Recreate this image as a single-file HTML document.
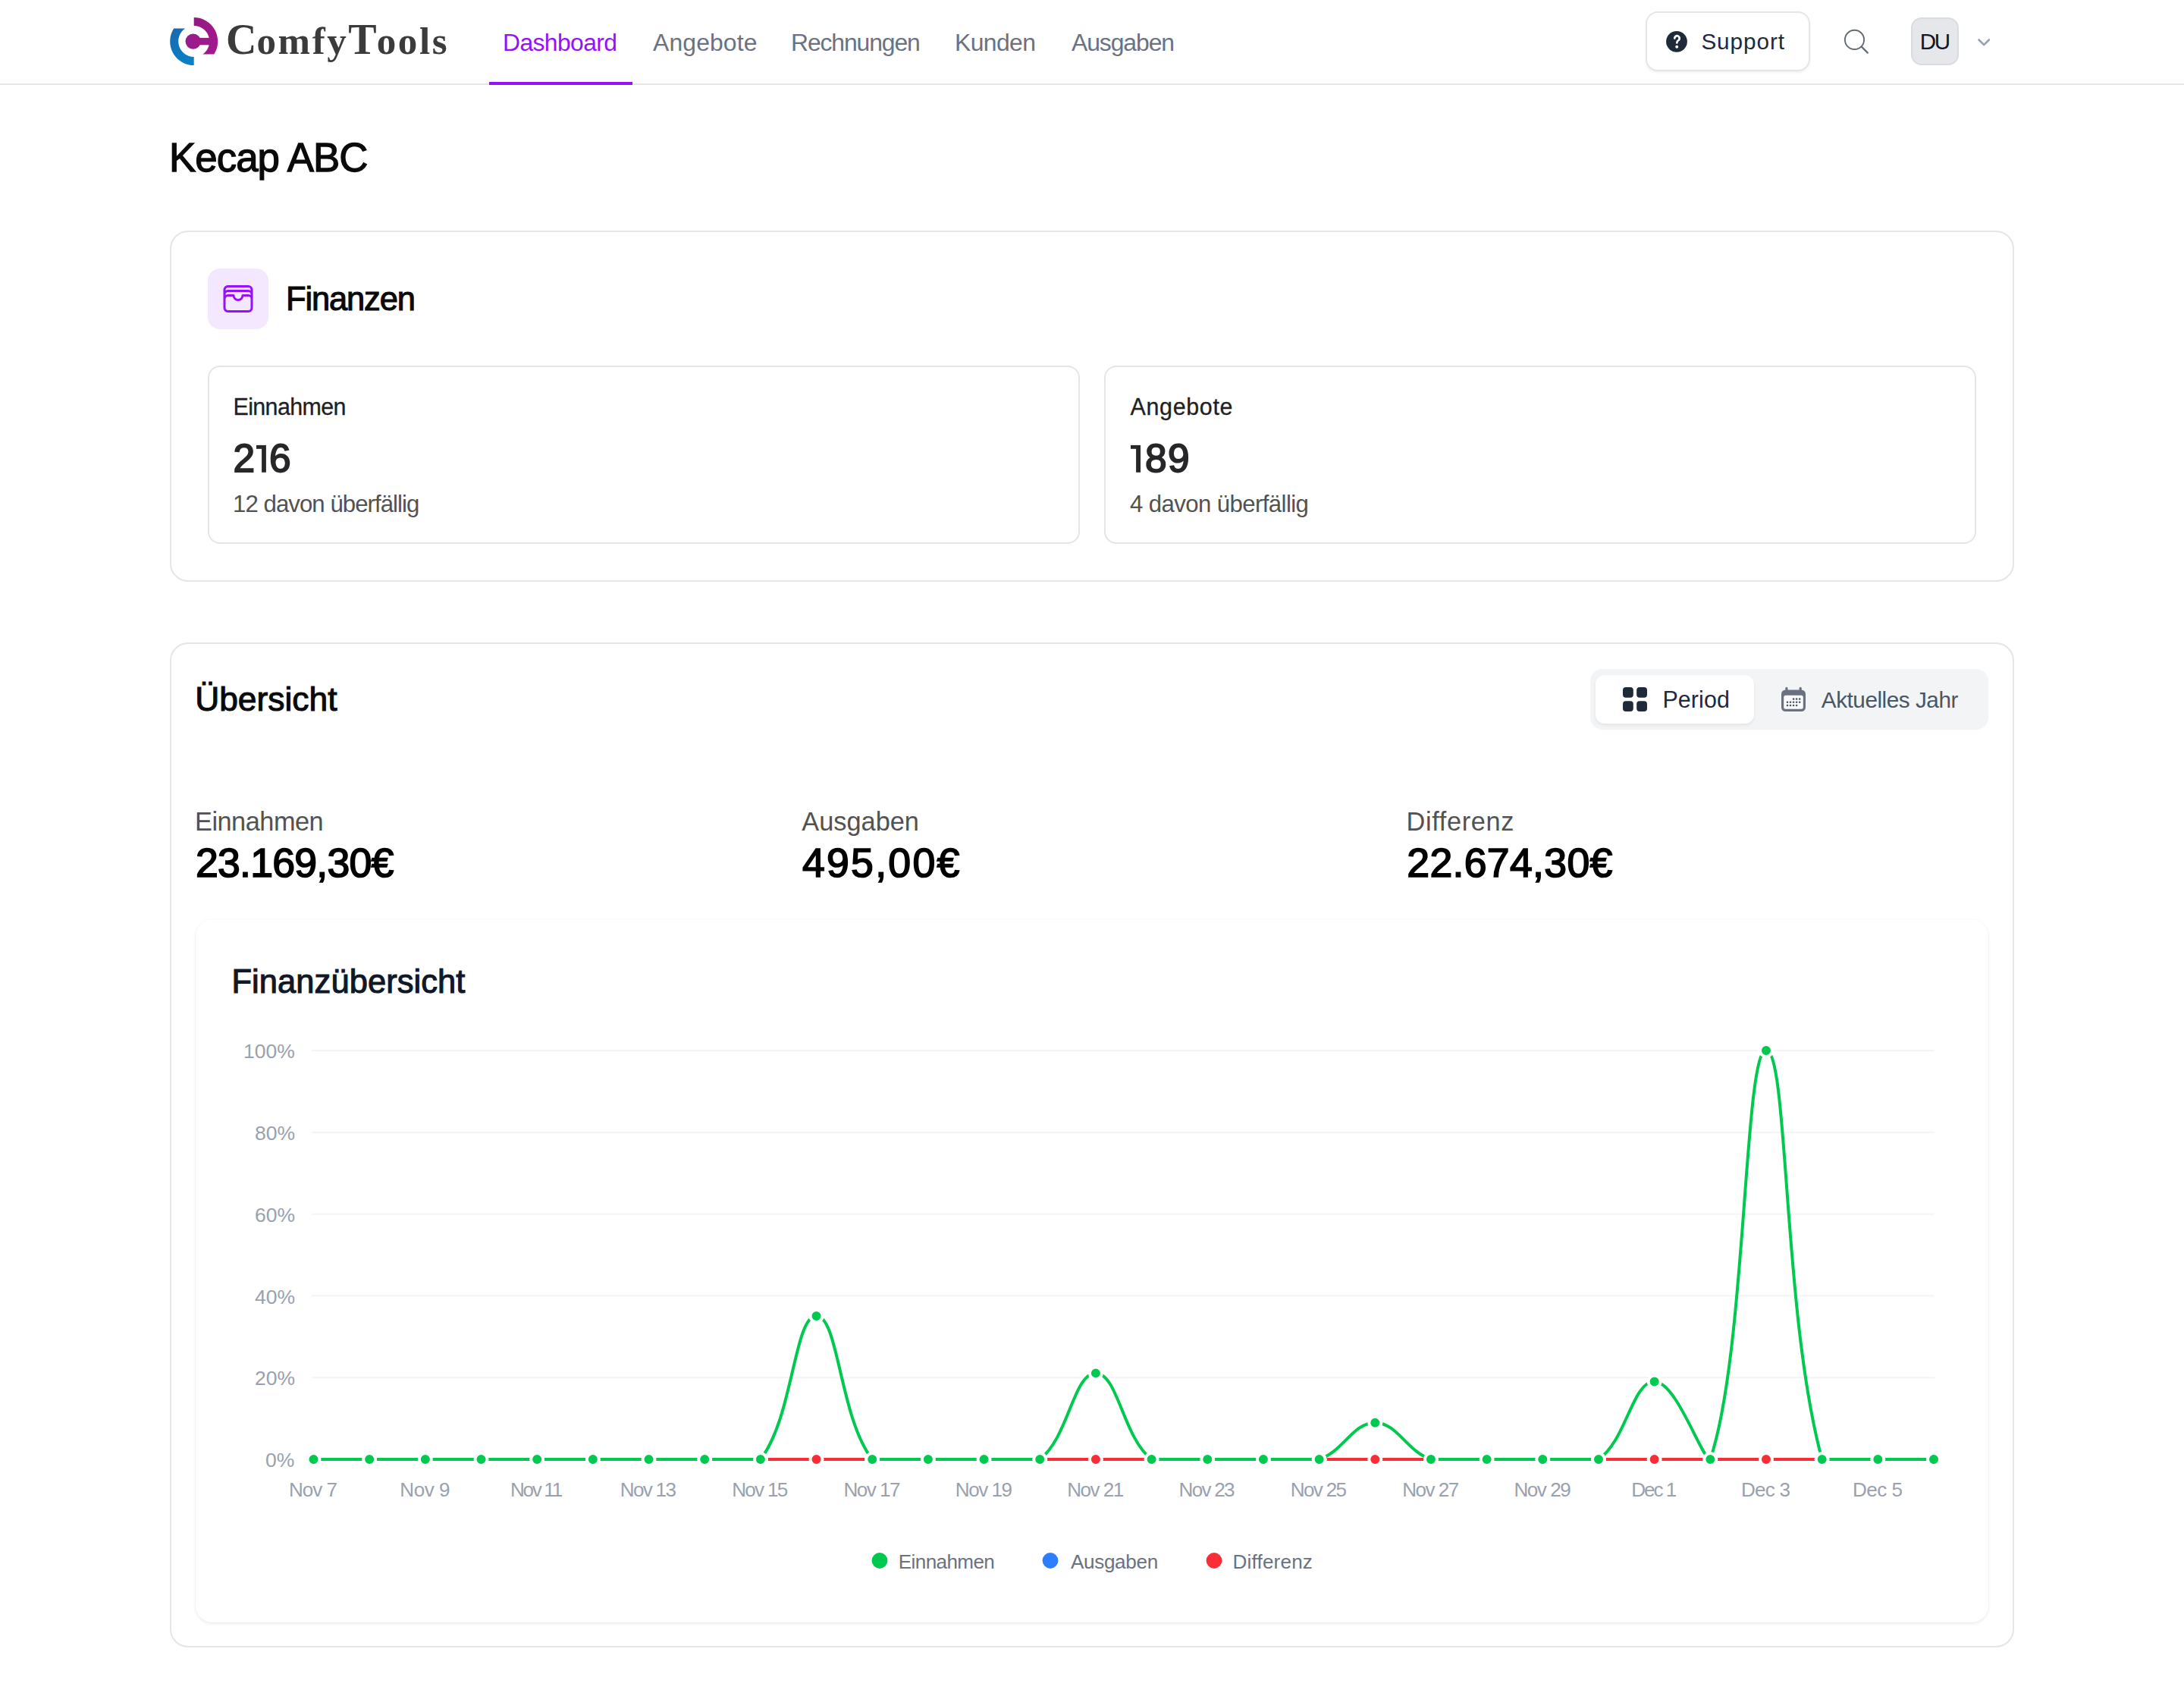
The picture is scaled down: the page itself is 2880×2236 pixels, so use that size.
<!DOCTYPE html>
<html><head><meta charset="utf-8"><title>ComfyTools Dashboard</title>
<style>
html,body{margin:0;padding:0;background:#fff;overflow:hidden;}
body{width:2880px;height:2236px;position:relative;overflow:hidden;font-family:"Liberation Sans",sans-serif;}
.b{position:absolute;box-sizing:border-box;}
.t{position:absolute;white-space:nowrap;line-height:1;}
svg.o{position:absolute;left:0;top:0;}
@media (max-width:2000px){body{zoom:0.5;}}
</style></head><body>
<div class="b" style="left:0;top:110px;width:2880px;height:2px;background:#e5e5e5"></div>
<div class="b" style="left:645px;top:108px;width:189px;height:4px;background:#9810fa"></div>
<div class="b" style="left:2170px;top:15px;width:217px;height:79px;border:2px solid #e5e5e5;border-radius:16px;box-shadow:0 2px 3px rgba(0,0,0,0.05)"></div>
<div class="b" style="left:2520px;top:23px;width:63px;height:63px;background:#e5e7eb;border:2px solid #d9dce1;border-radius:14px"></div>
<div class="b" style="left:224px;top:304px;width:2432px;height:463px;border:2px solid #e5e5e5;border-radius:24px"></div>
<div class="b" style="left:274px;top:354px;width:80px;height:80px;background:#f3e8ff;border-radius:16px"></div>
<div class="b" style="left:274px;top:482px;width:1150px;height:235px;border:2px solid #e5e5e5;border-radius:16px"></div>
<div class="b" style="left:1456px;top:482px;width:1150px;height:235px;border:2px solid #e5e5e5;border-radius:16px"></div>
<div class="b" style="left:224px;top:847px;width:2432px;height:1325px;border:2px solid #e5e5e5;border-radius:24px"></div>
<div class="b" style="left:2097px;top:882px;width:525px;height:80px;background:#f3f4f6;border-radius:16px"></div>
<div class="b" style="left:2104px;top:890px;width:209px;height:64px;background:#fff;border-radius:12px;box-shadow:0 2px 4px rgba(0,0,0,0.07)"></div>
<div class="b" style="left:258px;top:1212px;width:2364px;height:927px;background:#fff;border-radius:22px;box-shadow:0 2px 4px rgba(0,0,0,0.07),0 0 2px rgba(0,0,0,0.05)"></div>
<svg class="o" width="2880" height="2236" viewBox="0 0 2880 2236">
<defs><linearGradient id="gb" x1="0" y1="0" x2="0.3" y2="1"><stop offset="0" stop-color="#1a68ad"/><stop offset="1" stop-color="#0a7fc6"/></linearGradient>
<linearGradient id="gm" x1="0" y1="0" x2="1" y2="0.6"><stop offset="0" stop-color="#921a80"/><stop offset="1" stop-color="#a3178f"/></linearGradient></defs>
<g transform="translate(255.7 54.6)">
<path d="M0 31.5 A31.5 31.5 0 0 1 -26.52 -17 L-11.46 -17 A20.5 20.5 0 0 0 0 20.5 Z" fill="url(#gb)"/>
<path d="M0 -31.5 A31.5 31.5 0 0 1 26.52 17 L11.46 17 A20.5 20.5 0 0 0 0 -20.5 Z" fill="url(#gm)"/>
<circle cx="-1" cy="0" r="10.2" fill="#9b1a8c"/>
<rect x="0" y="-4.7" width="22" height="9.4" fill="#9b1a8c"/>
</g>
<svg x="290" y="370" width="48" height="48" viewBox="0 0 24 24" fill="none" stroke="#9810fa" stroke-width="1.5" stroke-linecap="round" stroke-linejoin="round"><path d="M21 12a2.25 2.25 0 0 0-2.25-2.25H15a3 3 0 1 1-6 0H5.25A2.25 2.25 0 0 0 3 12m18 0v6a2.25 2.25 0 0 1-2.25 2.25H5.25A2.25 2.25 0 0 1 3 18v-6m18 0V9M3 12V9m18 0a2.25 2.25 0 0 0-2.25-2.25H5.25A2.25 2.25 0 0 0 3 9m18 0V6a2.25 2.25 0 0 0-2.25-2.25H5.25A2.25 2.25 0 0 0 3 6v3"/></svg>
<circle cx="2211" cy="54.8" r="13.9" fill="#1e2939"/>
<path d="M2208.3 50.5 A3.2 3.2 0 1 1 2213.3 53.1 Q2211.3 54.3 2211.3 56.4" fill="none" stroke="#fff" stroke-width="2.7" stroke-linecap="round" stroke-linejoin="round"/>
<circle cx="2211.2" cy="61.7" r="2" fill="#fff"/>
<circle cx="2445.5" cy="52.4" r="12.6" fill="none" stroke="#656b75" stroke-width="1.9"/>
<path d="M2454.8 61.6 L2462.8 69.6" stroke="#656b75" stroke-width="2.2" stroke-linecap="round"/>
<path d="M2609.5 52.5 L2616.2 59.2 L2622.9 52.5" fill="none" stroke="#99a1af" stroke-width="2.6" stroke-linecap="round" stroke-linejoin="round"/>
<rect x="2140" y="906" width="13.8" height="13.8" rx="4" fill="#1e2939"/><rect x="2140" y="924.2" width="13.8" height="13.8" rx="4" fill="#1e2939"/><rect x="2158.2" y="906" width="13.8" height="13.8" rx="4" fill="#1e2939"/><rect x="2158.2" y="924.2" width="13.8" height="13.8" rx="4" fill="#1e2939"/>
<rect x="2349" y="909.5" width="32" height="28.5" rx="5.5" fill="#6a7282"/><rect x="2352.2" y="916.8" width="25.6" height="18" rx="2.5" fill="#fbfbfc"/><rect x="2354.3" y="905.8" width="3.2" height="7" rx="1.6" fill="#6a7282"/><rect x="2372.6" y="905.8" width="3.2" height="7" rx="1.6" fill="#6a7282"/><circle cx="2365.10" cy="921.6" r="1.3" fill="#4a5565"/><circle cx="2369.15" cy="921.6" r="1.3" fill="#4a5565"/><circle cx="2373.20" cy="921.6" r="1.3" fill="#4a5565"/><circle cx="2357.00" cy="925.8" r="1.3" fill="#4a5565"/><circle cx="2361.05" cy="925.8" r="1.3" fill="#4a5565"/><circle cx="2365.10" cy="925.8" r="1.3" fill="#4a5565"/><circle cx="2369.15" cy="925.8" r="1.3" fill="#4a5565"/><circle cx="2373.20" cy="925.8" r="1.3" fill="#4a5565"/><circle cx="2357.00" cy="930.0" r="1.3" fill="#4a5565"/><circle cx="2361.05" cy="930.0" r="1.3" fill="#4a5565"/><circle cx="2365.10" cy="930.0" r="1.3" fill="#4a5565"/><circle cx="2369.15" cy="930.0" r="1.3" fill="#4a5565"/>
<rect x="411" y="1384.00" width="2140" height="2" fill="#f3f4f6"/><rect x="411" y="1491.80" width="2140" height="2" fill="#f3f4f6"/><rect x="411" y="1599.60" width="2140" height="2" fill="#f3f4f6"/><rect x="411" y="1707.40" width="2140" height="2" fill="#f3f4f6"/><rect x="411" y="1815.20" width="2140" height="2" fill="#f3f4f6"/><rect x="411" y="1923.00" width="2140" height="2" fill="#f3f4f6"/><path d="M413.50 1924.00 C442.97 1924.00 457.70 1924.00 487.17 1924.00 C516.64 1924.00 531.38 1924.00 560.84 1924.00 C590.31 1924.00 605.05 1924.00 634.52 1924.00 C663.99 1924.00 678.72 1924.00 708.19 1924.00 C737.66 1924.00 752.39 1924.00 781.86 1924.00 C811.33 1924.00 826.07 1924.00 855.53 1924.00 C885.00 1924.00 899.74 1924.00 929.21 1924.00 C958.68 1924.00 973.41 1924.00 1002.88 1924.00 C1032.35 1924.00 1047.08 1924.00 1076.55 1924.00 C1106.02 1924.00 1120.76 1924.00 1150.22 1924.00 C1179.69 1924.00 1194.43 1924.00 1223.90 1924.00 C1253.37 1924.00 1268.10 1924.00 1297.57 1924.00 C1327.04 1924.00 1341.77 1924.00 1371.24 1924.00 C1400.71 1924.00 1415.44 1924.00 1444.91 1924.00 C1474.38 1924.00 1489.12 1924.00 1518.59 1924.00 C1548.06 1924.00 1562.79 1924.00 1592.26 1924.00 C1621.73 1924.00 1636.46 1924.00 1665.93 1924.00 C1695.40 1924.00 1710.13 1924.00 1739.60 1924.00 C1769.07 1924.00 1783.81 1924.00 1813.28 1924.00 C1842.74 1924.00 1857.48 1924.00 1886.95 1924.00 C1916.42 1924.00 1931.15 1924.00 1960.62 1924.00 C1990.09 1924.00 2004.82 1924.00 2034.29 1924.00 C2063.76 1924.00 2078.50 1924.00 2107.97 1924.00 C2137.43 1924.00 2152.17 1924.00 2181.64 1924.00 C2211.11 1924.00 2225.84 1924.00 2255.31 1924.00 C2284.78 1924.00 2299.51 1924.00 2328.98 1924.00 C2358.45 1924.00 2373.19 1924.00 2402.66 1924.00 C2432.12 1924.00 2446.86 1924.00 2476.33 1924.00 C2505.80 1924.00 2520.53 1924.00 2550.00 1924.00" fill="none" stroke="#2b7fff" stroke-width="4" stroke-linejoin="round"/><circle cx="413.50" cy="1924.00" r="8" fill="#2b7fff" stroke="#fff" stroke-width="4"/><circle cx="487.17" cy="1924.00" r="8" fill="#2b7fff" stroke="#fff" stroke-width="4"/><circle cx="560.84" cy="1924.00" r="8" fill="#2b7fff" stroke="#fff" stroke-width="4"/><circle cx="634.52" cy="1924.00" r="8" fill="#2b7fff" stroke="#fff" stroke-width="4"/><circle cx="708.19" cy="1924.00" r="8" fill="#2b7fff" stroke="#fff" stroke-width="4"/><circle cx="781.86" cy="1924.00" r="8" fill="#2b7fff" stroke="#fff" stroke-width="4"/><circle cx="855.53" cy="1924.00" r="8" fill="#2b7fff" stroke="#fff" stroke-width="4"/><circle cx="929.21" cy="1924.00" r="8" fill="#2b7fff" stroke="#fff" stroke-width="4"/><circle cx="1002.88" cy="1924.00" r="8" fill="#2b7fff" stroke="#fff" stroke-width="4"/><circle cx="1076.55" cy="1924.00" r="8" fill="#2b7fff" stroke="#fff" stroke-width="4"/><circle cx="1150.22" cy="1924.00" r="8" fill="#2b7fff" stroke="#fff" stroke-width="4"/><circle cx="1223.90" cy="1924.00" r="8" fill="#2b7fff" stroke="#fff" stroke-width="4"/><circle cx="1297.57" cy="1924.00" r="8" fill="#2b7fff" stroke="#fff" stroke-width="4"/><circle cx="1371.24" cy="1924.00" r="8" fill="#2b7fff" stroke="#fff" stroke-width="4"/><circle cx="1444.91" cy="1924.00" r="8" fill="#2b7fff" stroke="#fff" stroke-width="4"/><circle cx="1518.59" cy="1924.00" r="8" fill="#2b7fff" stroke="#fff" stroke-width="4"/><circle cx="1592.26" cy="1924.00" r="8" fill="#2b7fff" stroke="#fff" stroke-width="4"/><circle cx="1665.93" cy="1924.00" r="8" fill="#2b7fff" stroke="#fff" stroke-width="4"/><circle cx="1739.60" cy="1924.00" r="8" fill="#2b7fff" stroke="#fff" stroke-width="4"/><circle cx="1813.28" cy="1924.00" r="8" fill="#2b7fff" stroke="#fff" stroke-width="4"/><circle cx="1886.95" cy="1924.00" r="8" fill="#2b7fff" stroke="#fff" stroke-width="4"/><circle cx="1960.62" cy="1924.00" r="8" fill="#2b7fff" stroke="#fff" stroke-width="4"/><circle cx="2034.29" cy="1924.00" r="8" fill="#2b7fff" stroke="#fff" stroke-width="4"/><circle cx="2107.97" cy="1924.00" r="8" fill="#2b7fff" stroke="#fff" stroke-width="4"/><circle cx="2181.64" cy="1924.00" r="8" fill="#2b7fff" stroke="#fff" stroke-width="4"/><circle cx="2255.31" cy="1924.00" r="8" fill="#2b7fff" stroke="#fff" stroke-width="4"/><circle cx="2328.98" cy="1924.00" r="8" fill="#2b7fff" stroke="#fff" stroke-width="4"/><circle cx="2402.66" cy="1924.00" r="8" fill="#2b7fff" stroke="#fff" stroke-width="4"/><circle cx="2476.33" cy="1924.00" r="8" fill="#2b7fff" stroke="#fff" stroke-width="4"/><circle cx="2550.00" cy="1924.00" r="8" fill="#2b7fff" stroke="#fff" stroke-width="4"/><path d="M413.50 1924.00 C442.97 1924.00 457.70 1924.00 487.17 1924.00 C516.64 1924.00 531.38 1924.00 560.84 1924.00 C590.31 1924.00 605.05 1924.00 634.52 1924.00 C663.99 1924.00 678.72 1924.00 708.19 1924.00 C737.66 1924.00 752.39 1924.00 781.86 1924.00 C811.33 1924.00 826.07 1924.00 855.53 1924.00 C885.00 1924.00 899.74 1924.00 929.21 1924.00 C958.68 1924.00 973.41 1924.00 1002.88 1924.00 C1032.35 1924.00 1047.08 1924.00 1076.55 1924.00 C1106.02 1924.00 1120.76 1924.00 1150.22 1924.00 C1179.69 1924.00 1194.43 1924.00 1223.90 1924.00 C1253.37 1924.00 1268.10 1924.00 1297.57 1924.00 C1327.04 1924.00 1341.77 1924.00 1371.24 1924.00 C1400.71 1924.00 1415.44 1924.00 1444.91 1924.00 C1474.38 1924.00 1489.12 1924.00 1518.59 1924.00 C1548.06 1924.00 1562.79 1924.00 1592.26 1924.00 C1621.73 1924.00 1636.46 1924.00 1665.93 1924.00 C1695.40 1924.00 1710.13 1924.00 1739.60 1924.00 C1769.07 1924.00 1783.81 1924.00 1813.28 1924.00 C1842.74 1924.00 1857.48 1924.00 1886.95 1924.00 C1916.42 1924.00 1931.15 1924.00 1960.62 1924.00 C1990.09 1924.00 2004.82 1924.00 2034.29 1924.00 C2063.76 1924.00 2078.50 1924.00 2107.97 1924.00 C2137.43 1924.00 2152.17 1924.00 2181.64 1924.00 C2211.11 1924.00 2225.84 1924.00 2255.31 1924.00 C2284.78 1924.00 2299.51 1924.00 2328.98 1924.00 C2358.45 1924.00 2373.19 1924.00 2402.66 1924.00 C2432.12 1924.00 2446.86 1924.00 2476.33 1924.00 C2505.80 1924.00 2520.53 1924.00 2550.00 1924.00" fill="none" stroke="#fb2c36" stroke-width="4" stroke-linejoin="round"/><circle cx="413.50" cy="1924.00" r="8" fill="#fb2c36" stroke="#fff" stroke-width="4"/><circle cx="487.17" cy="1924.00" r="8" fill="#fb2c36" stroke="#fff" stroke-width="4"/><circle cx="560.84" cy="1924.00" r="8" fill="#fb2c36" stroke="#fff" stroke-width="4"/><circle cx="634.52" cy="1924.00" r="8" fill="#fb2c36" stroke="#fff" stroke-width="4"/><circle cx="708.19" cy="1924.00" r="8" fill="#fb2c36" stroke="#fff" stroke-width="4"/><circle cx="781.86" cy="1924.00" r="8" fill="#fb2c36" stroke="#fff" stroke-width="4"/><circle cx="855.53" cy="1924.00" r="8" fill="#fb2c36" stroke="#fff" stroke-width="4"/><circle cx="929.21" cy="1924.00" r="8" fill="#fb2c36" stroke="#fff" stroke-width="4"/><circle cx="1002.88" cy="1924.00" r="8" fill="#fb2c36" stroke="#fff" stroke-width="4"/><circle cx="1076.55" cy="1924.00" r="8" fill="#fb2c36" stroke="#fff" stroke-width="4"/><circle cx="1150.22" cy="1924.00" r="8" fill="#fb2c36" stroke="#fff" stroke-width="4"/><circle cx="1223.90" cy="1924.00" r="8" fill="#fb2c36" stroke="#fff" stroke-width="4"/><circle cx="1297.57" cy="1924.00" r="8" fill="#fb2c36" stroke="#fff" stroke-width="4"/><circle cx="1371.24" cy="1924.00" r="8" fill="#fb2c36" stroke="#fff" stroke-width="4"/><circle cx="1444.91" cy="1924.00" r="8" fill="#fb2c36" stroke="#fff" stroke-width="4"/><circle cx="1518.59" cy="1924.00" r="8" fill="#fb2c36" stroke="#fff" stroke-width="4"/><circle cx="1592.26" cy="1924.00" r="8" fill="#fb2c36" stroke="#fff" stroke-width="4"/><circle cx="1665.93" cy="1924.00" r="8" fill="#fb2c36" stroke="#fff" stroke-width="4"/><circle cx="1739.60" cy="1924.00" r="8" fill="#fb2c36" stroke="#fff" stroke-width="4"/><circle cx="1813.28" cy="1924.00" r="8" fill="#fb2c36" stroke="#fff" stroke-width="4"/><circle cx="1886.95" cy="1924.00" r="8" fill="#fb2c36" stroke="#fff" stroke-width="4"/><circle cx="1960.62" cy="1924.00" r="8" fill="#fb2c36" stroke="#fff" stroke-width="4"/><circle cx="2034.29" cy="1924.00" r="8" fill="#fb2c36" stroke="#fff" stroke-width="4"/><circle cx="2107.97" cy="1924.00" r="8" fill="#fb2c36" stroke="#fff" stroke-width="4"/><circle cx="2181.64" cy="1924.00" r="8" fill="#fb2c36" stroke="#fff" stroke-width="4"/><circle cx="2255.31" cy="1924.00" r="8" fill="#fb2c36" stroke="#fff" stroke-width="4"/><circle cx="2328.98" cy="1924.00" r="8" fill="#fb2c36" stroke="#fff" stroke-width="4"/><circle cx="2402.66" cy="1924.00" r="8" fill="#fb2c36" stroke="#fff" stroke-width="4"/><circle cx="2476.33" cy="1924.00" r="8" fill="#fb2c36" stroke="#fff" stroke-width="4"/><circle cx="2550.00" cy="1924.00" r="8" fill="#fb2c36" stroke="#fff" stroke-width="4"/><path d="M413.50 1924.00 C442.97 1924.00 457.70 1924.00 487.17 1924.00 C516.64 1924.00 531.38 1924.00 560.84 1924.00 C590.31 1924.00 605.05 1924.00 634.52 1924.00 C663.99 1924.00 678.72 1924.00 708.19 1924.00 C737.66 1924.00 752.39 1924.00 781.86 1924.00 C811.33 1924.00 826.07 1924.00 855.53 1924.00 C885.00 1924.00 899.74 1924.00 929.21 1924.00 C958.68 1924.00 987.18 1924.00 1002.88 1924.00 C1046.11 1868.55 1047.08 1735.03 1076.55 1735.03 C1106.02 1735.03 1106.99 1868.55 1150.22 1924.00 C1165.93 1924.00 1194.43 1924.00 1223.90 1924.00 C1253.37 1924.00 1268.10 1924.00 1297.57 1924.00 C1327.04 1924.00 1350.47 1924.00 1371.24 1924.00 C1409.41 1894.57 1415.44 1810.38 1444.91 1810.38 C1474.38 1810.38 1480.42 1894.57 1518.59 1924.00 C1539.35 1924.00 1562.79 1924.00 1592.26 1924.00 C1621.73 1924.00 1636.46 1924.00 1665.93 1924.00 C1695.40 1924.00 1712.76 1924.00 1739.60 1924.00 C1771.70 1913.48 1783.81 1875.71 1813.28 1875.71 C1842.74 1875.71 1854.85 1913.48 1886.95 1924.00 C1913.79 1924.00 1931.15 1924.00 1960.62 1924.00 C1990.09 1924.00 2004.82 1924.00 2034.29 1924.00 C2063.76 1924.00 2086.24 1924.00 2107.97 1924.00 C2145.17 1898.14 2152.17 1821.59 2181.64 1821.59 C2211.11 1821.59 2244.22 1924.00 2255.31 1924.00 C2303.15 1782.24 2299.51 1385.00 2328.98 1385.00 C2358.45 1385.00 2350.75 1734.12 2402.66 1924.00 C2409.68 1924.00 2446.86 1924.00 2476.33 1924.00 C2505.80 1924.00 2520.53 1924.00 2550.00 1924.00" fill="none" stroke="#00c950" stroke-width="4" stroke-linejoin="round"/><circle cx="413.50" cy="1924.00" r="8" fill="#00c950" stroke="#fff" stroke-width="4"/><circle cx="487.17" cy="1924.00" r="8" fill="#00c950" stroke="#fff" stroke-width="4"/><circle cx="560.84" cy="1924.00" r="8" fill="#00c950" stroke="#fff" stroke-width="4"/><circle cx="634.52" cy="1924.00" r="8" fill="#00c950" stroke="#fff" stroke-width="4"/><circle cx="708.19" cy="1924.00" r="8" fill="#00c950" stroke="#fff" stroke-width="4"/><circle cx="781.86" cy="1924.00" r="8" fill="#00c950" stroke="#fff" stroke-width="4"/><circle cx="855.53" cy="1924.00" r="8" fill="#00c950" stroke="#fff" stroke-width="4"/><circle cx="929.21" cy="1924.00" r="8" fill="#00c950" stroke="#fff" stroke-width="4"/><circle cx="1002.88" cy="1924.00" r="8" fill="#00c950" stroke="#fff" stroke-width="4"/><circle cx="1076.55" cy="1735.03" r="8" fill="#00c950" stroke="#fff" stroke-width="4"/><circle cx="1150.22" cy="1924.00" r="8" fill="#00c950" stroke="#fff" stroke-width="4"/><circle cx="1223.90" cy="1924.00" r="8" fill="#00c950" stroke="#fff" stroke-width="4"/><circle cx="1297.57" cy="1924.00" r="8" fill="#00c950" stroke="#fff" stroke-width="4"/><circle cx="1371.24" cy="1924.00" r="8" fill="#00c950" stroke="#fff" stroke-width="4"/><circle cx="1444.91" cy="1810.38" r="8" fill="#00c950" stroke="#fff" stroke-width="4"/><circle cx="1518.59" cy="1924.00" r="8" fill="#00c950" stroke="#fff" stroke-width="4"/><circle cx="1592.26" cy="1924.00" r="8" fill="#00c950" stroke="#fff" stroke-width="4"/><circle cx="1665.93" cy="1924.00" r="8" fill="#00c950" stroke="#fff" stroke-width="4"/><circle cx="1739.60" cy="1924.00" r="8" fill="#00c950" stroke="#fff" stroke-width="4"/><circle cx="1813.28" cy="1875.71" r="8" fill="#00c950" stroke="#fff" stroke-width="4"/><circle cx="1886.95" cy="1924.00" r="8" fill="#00c950" stroke="#fff" stroke-width="4"/><circle cx="1960.62" cy="1924.00" r="8" fill="#00c950" stroke="#fff" stroke-width="4"/><circle cx="2034.29" cy="1924.00" r="8" fill="#00c950" stroke="#fff" stroke-width="4"/><circle cx="2107.97" cy="1924.00" r="8" fill="#00c950" stroke="#fff" stroke-width="4"/><circle cx="2181.64" cy="1821.59" r="8" fill="#00c950" stroke="#fff" stroke-width="4"/><circle cx="2255.31" cy="1924.00" r="8" fill="#00c950" stroke="#fff" stroke-width="4"/><circle cx="2328.98" cy="1385.00" r="8" fill="#00c950" stroke="#fff" stroke-width="4"/><circle cx="2402.66" cy="1924.00" r="8" fill="#00c950" stroke="#fff" stroke-width="4"/><circle cx="2476.33" cy="1924.00" r="8" fill="#00c950" stroke="#fff" stroke-width="4"/><circle cx="2550.00" cy="1924.00" r="8" fill="#00c950" stroke="#fff" stroke-width="4"/>
<circle cx="1160" cy="2057.5" r="10.4" fill="#00c950"/><circle cx="1385" cy="2057.5" r="10.4" fill="#2b7fff"/><circle cx="1601" cy="2057.5" r="10.4" fill="#fb2c36"/>
<rect x="345.1" y="586.9" width="5.8" height="35.9" fill="#27272a"/><rect x="338" y="586.9" width="7.6" height="4.9" fill="#27272a"/>
<rect x="1498.1" y="586.9" width="5.9" height="35.9" fill="#27272a"/><rect x="1491" y="586.9" width="7.6" height="4.9" fill="#27272a"/>
</svg>
<div class="t" style="left:298px;top:24px;font-family:'Liberation Serif';font-weight:700;color:#3b3b3b"><span style="font-size:56px">C</span><span style="font-size:51px;letter-spacing:2.6px">omfy</span><span style="font-size:56px">T</span><span style="font-size:51px;letter-spacing:2.6px">ools</span></div>
<div class="t" style="left:663.00px;top:41.00px;font-family:'Liberation Sans';font-size:31.88px;font-weight:400;color:#9810fa;letter-spacing:-0.62px;-webkit-text-stroke:0px #9810fa">Dashboard</div>
<div class="t" style="left:861.00px;top:41.00px;font-family:'Liberation Sans';font-size:31.88px;font-weight:400;color:#6a7282;letter-spacing:0.14px;-webkit-text-stroke:0px #6a7282">Angebote</div>
<div class="t" style="left:1043.00px;top:41.00px;font-family:'Liberation Sans';font-size:31.88px;font-weight:400;color:#6a7282;letter-spacing:-1.11px;-webkit-text-stroke:0px #6a7282">Rechnungen</div>
<div class="t" style="left:1259.00px;top:41.00px;font-family:'Liberation Sans';font-size:31.88px;font-weight:400;color:#6a7282;letter-spacing:-0.60px;-webkit-text-stroke:0px #6a7282">Kunden</div>
<div class="t" style="left:1413.00px;top:41.00px;font-family:'Liberation Sans';font-size:31.88px;font-weight:400;color:#6a7282;letter-spacing:-1.07px;-webkit-text-stroke:0px #6a7282">Ausgaben</div>
<div class="t" style="left:2243.40px;top:40.00px;font-family:'Liberation Sans';font-size:29.71px;font-weight:400;color:#1e2939;letter-spacing:0.92px;-webkit-text-stroke:0px #1e2939">Support</div>
<div class="t" style="left:2531.80px;top:40.00px;font-family:'Liberation Sans';font-size:29.57px;font-weight:400;color:#101828;letter-spacing:-2.40px;-webkit-text-stroke:0px #101828">DU</div>
<div class="t" style="left:223.00px;top:182.00px;font-family:'Liberation Sans';font-size:52.90px;font-weight:400;color:#0a0a0a;letter-spacing:-1.00px;-webkit-text-stroke:1.3px #0a0a0a">Kecap ABC</div>
<div class="t" style="left:377.00px;top:373.00px;font-family:'Liberation Sans';font-size:43.48px;font-weight:400;color:#0a0a0a;letter-spacing:-1.14px;-webkit-text-stroke:1.1px #0a0a0a">Finanzen</div>
<div class="t" style="left:307.50px;top:521.00px;font-family:'Liberation Sans';font-size:30.43px;font-weight:400;color:#1f1f1f;letter-spacing:-0.62px;-webkit-text-stroke:0.3px #1f1f1f">Einnahmen</div>
<div class="t" style="left:307.50px;top:579.00px;font-family:'Liberation Sans';font-size:51.45px;font-weight:400;color:#27272a;letter-spacing:0.00px;-webkit-text-stroke:1.8px #27272a">2</div>
<div class="t" style="left:355.00px;top:579.00px;font-family:'Liberation Sans';font-size:51.45px;font-weight:400;color:#27272a;letter-spacing:0.00px;-webkit-text-stroke:1.8px #27272a">6</div>
<div class="t" style="left:307.00px;top:649.00px;font-family:'Liberation Sans';font-size:31.16px;font-weight:400;color:#525252;letter-spacing:-0.94px;-webkit-text-stroke:0px #525252">12 davon überfällig</div>
<div class="t" style="left:1490.60px;top:521.00px;font-family:'Liberation Sans';font-size:30.43px;font-weight:400;color:#1f1f1f;letter-spacing:0.66px;-webkit-text-stroke:0.3px #1f1f1f">Angebote</div>
<div class="t" style="left:1510.10px;top:579.00px;font-family:'Liberation Sans';font-size:51.45px;font-weight:400;color:#27272a;letter-spacing:0.00px;-webkit-text-stroke:1.8px #27272a">8</div>
<div class="t" style="left:1540.10px;top:579.00px;font-family:'Liberation Sans';font-size:51.45px;font-weight:400;color:#27272a;letter-spacing:0.00px;-webkit-text-stroke:1.8px #27272a">9</div>
<div class="t" style="left:1490.00px;top:649.00px;font-family:'Liberation Sans';font-size:31.16px;font-weight:400;color:#525252;letter-spacing:-0.59px;-webkit-text-stroke:0px #525252">4 davon überfällig</div>
<div class="t" style="left:257.20px;top:900.00px;font-family:'Liberation Sans';font-size:44.35px;font-weight:400;color:#0a0a0a;letter-spacing:0.00px;-webkit-text-stroke:1.1px #0a0a0a">Übersicht</div>
<div class="t" style="left:2192.40px;top:907.00px;font-family:'Liberation Sans';font-size:30.43px;font-weight:400;color:#1e2939;letter-spacing:0.12px;-webkit-text-stroke:0px #1e2939">Period</div>
<div class="t" style="left:2401.80px;top:908.00px;font-family:'Liberation Sans';font-size:29.71px;font-weight:400;color:#4a5565;letter-spacing:-0.46px;-webkit-text-stroke:0px #4a5565">Aktuelles Jahr</div>
<div class="t" style="left:257.00px;top:1066.00px;font-family:'Liberation Sans';font-size:34.35px;font-weight:400;color:#525252;letter-spacing:-0.50px;-webkit-text-stroke:0px #525252">Einnahmen</div>
<div class="t" style="left:258.00px;top:1111.00px;font-family:'Liberation Sans';font-size:53.62px;font-weight:400;color:#000000;letter-spacing:-0.78px;-webkit-text-stroke:1.7px #000000">23.169,30€</div>
<div class="t" style="left:1057.30px;top:1066.00px;font-family:'Liberation Sans';font-size:34.35px;font-weight:400;color:#525252;letter-spacing:0.00px;-webkit-text-stroke:0px #525252">Ausgaben</div>
<div class="t" style="left:1057.90px;top:1111.00px;font-family:'Liberation Sans';font-size:53.62px;font-weight:400;color:#000000;letter-spacing:2.28px;-webkit-text-stroke:1.7px #000000">495,00€</div>
<div class="t" style="left:1854.60px;top:1066.00px;font-family:'Liberation Sans';font-size:34.35px;font-weight:400;color:#525252;letter-spacing:0.62px;-webkit-text-stroke:0px #525252">Differenz</div>
<div class="t" style="left:1855.30px;top:1111.00px;font-family:'Liberation Sans';font-size:53.62px;font-weight:400;color:#000000;letter-spacing:0.30px;-webkit-text-stroke:1.7px #000000">22.674,30€</div>
<div class="t" style="left:305.50px;top:1273.00px;font-family:'Liberation Sans';font-size:43.48px;font-weight:400;color:#101828;letter-spacing:0.07px;-webkit-text-stroke:1.1px #101828">Finanzübersicht</div>
<div class="t" style="left:1184.80px;top:2046.00px;font-family:'Liberation Sans';font-size:26.09px;font-weight:400;color:#6a7282;letter-spacing:-0.62px;-webkit-text-stroke:0px #6a7282">Einnahmen</div>
<div class="t" style="left:1412.00px;top:2046.00px;font-family:'Liberation Sans';font-size:26.09px;font-weight:400;color:#6a7282;letter-spacing:-0.33px;-webkit-text-stroke:0px #6a7282">Ausgaben</div>
<div class="t" style="left:1625.50px;top:2046.00px;font-family:'Liberation Sans';font-size:26.09px;font-weight:400;color:#6a7282;letter-spacing:0.19px;-webkit-text-stroke:0px #6a7282">Differenz</div>
<div class="t" style="left:321.00px;top:1373.00px;font-family:'Liberation Sans';font-size:26.52px;font-weight:400;color:#99a1af;letter-spacing:0.00px;-webkit-text-stroke:0px #99a1af">100%</div>
<div class="t" style="left:336.00px;top:1481.00px;font-family:'Liberation Sans';font-size:26.52px;font-weight:400;color:#99a1af;letter-spacing:0.00px;-webkit-text-stroke:0px #99a1af">80%</div>
<div class="t" style="left:336.00px;top:1589.00px;font-family:'Liberation Sans';font-size:26.52px;font-weight:400;color:#99a1af;letter-spacing:0.00px;-webkit-text-stroke:0px #99a1af">60%</div>
<div class="t" style="left:336.00px;top:1697.00px;font-family:'Liberation Sans';font-size:26.52px;font-weight:400;color:#99a1af;letter-spacing:0.00px;-webkit-text-stroke:0px #99a1af">40%</div>
<div class="t" style="left:336.00px;top:1804.00px;font-family:'Liberation Sans';font-size:26.52px;font-weight:400;color:#99a1af;letter-spacing:0.00px;-webkit-text-stroke:0px #99a1af">20%</div>
<div class="t" style="left:350.00px;top:1912.00px;font-family:'Liberation Sans';font-size:26.52px;font-weight:400;color:#99a1af;letter-spacing:0.00px;-webkit-text-stroke:0px #99a1af">0%</div>
<div class="t" style="left:381.00px;top:1951.00px;font-family:'Liberation Sans';font-size:26.09px;font-weight:400;color:#99a1af;letter-spacing:-1.00px;-webkit-text-stroke:0px #99a1af">Nov 7</div>
<div class="t" style="left:527.34px;top:1951.00px;font-family:'Liberation Sans';font-size:26.09px;font-weight:400;color:#99a1af;letter-spacing:-0.50px;-webkit-text-stroke:0px #99a1af">Nov 9</div>
<div class="t" style="left:672.94px;top:1951.00px;font-family:'Liberation Sans';font-size:26.09px;font-weight:400;color:#99a1af;letter-spacing:-2.30px;-webkit-text-stroke:0px #99a1af">Nov 11</div>
<div class="t" style="left:817.78px;top:1951.00px;font-family:'Liberation Sans';font-size:26.09px;font-weight:400;color:#99a1af;letter-spacing:-1.70px;-webkit-text-stroke:0px #99a1af">Nov 13</div>
<div class="t" style="left:965.13px;top:1951.00px;font-family:'Liberation Sans';font-size:26.09px;font-weight:400;color:#99a1af;letter-spacing:-1.70px;-webkit-text-stroke:0px #99a1af">Nov 15</div>
<div class="t" style="left:1112.47px;top:1951.00px;font-family:'Liberation Sans';font-size:26.09px;font-weight:400;color:#99a1af;letter-spacing:-1.50px;-webkit-text-stroke:0px #99a1af">Nov 17</div>
<div class="t" style="left:1259.82px;top:1951.00px;font-family:'Liberation Sans';font-size:26.09px;font-weight:400;color:#99a1af;letter-spacing:-1.50px;-webkit-text-stroke:0px #99a1af">Nov 19</div>
<div class="t" style="left:1407.16px;top:1951.00px;font-family:'Liberation Sans';font-size:26.09px;font-weight:400;color:#99a1af;letter-spacing:-1.50px;-webkit-text-stroke:0px #99a1af">Nov 21</div>
<div class="t" style="left:1554.51px;top:1951.00px;font-family:'Liberation Sans';font-size:26.09px;font-weight:400;color:#99a1af;letter-spacing:-1.70px;-webkit-text-stroke:0px #99a1af">Nov 23</div>
<div class="t" style="left:1701.85px;top:1951.00px;font-family:'Liberation Sans';font-size:26.09px;font-weight:400;color:#99a1af;letter-spacing:-1.70px;-webkit-text-stroke:0px #99a1af">Nov 25</div>
<div class="t" style="left:1849.20px;top:1951.00px;font-family:'Liberation Sans';font-size:26.09px;font-weight:400;color:#99a1af;letter-spacing:-1.50px;-webkit-text-stroke:0px #99a1af">Nov 27</div>
<div class="t" style="left:1996.54px;top:1951.00px;font-family:'Liberation Sans';font-size:26.09px;font-weight:400;color:#99a1af;letter-spacing:-1.50px;-webkit-text-stroke:0px #99a1af">Nov 29</div>
<div class="t" style="left:2151.14px;top:1951.00px;font-family:'Liberation Sans';font-size:26.09px;font-weight:400;color:#99a1af;letter-spacing:-2.00px;-webkit-text-stroke:0px #99a1af">Dec 1</div>
<div class="t" style="left:2295.98px;top:1951.00px;font-family:'Liberation Sans';font-size:26.09px;font-weight:400;color:#99a1af;letter-spacing:-0.75px;-webkit-text-stroke:0px #99a1af">Dec 3</div>
<div class="t" style="left:2442.88px;top:1951.00px;font-family:'Liberation Sans';font-size:26.09px;font-weight:400;color:#99a1af;letter-spacing:-0.53px;-webkit-text-stroke:0px #99a1af">Dec 5</div>
</body></html>
